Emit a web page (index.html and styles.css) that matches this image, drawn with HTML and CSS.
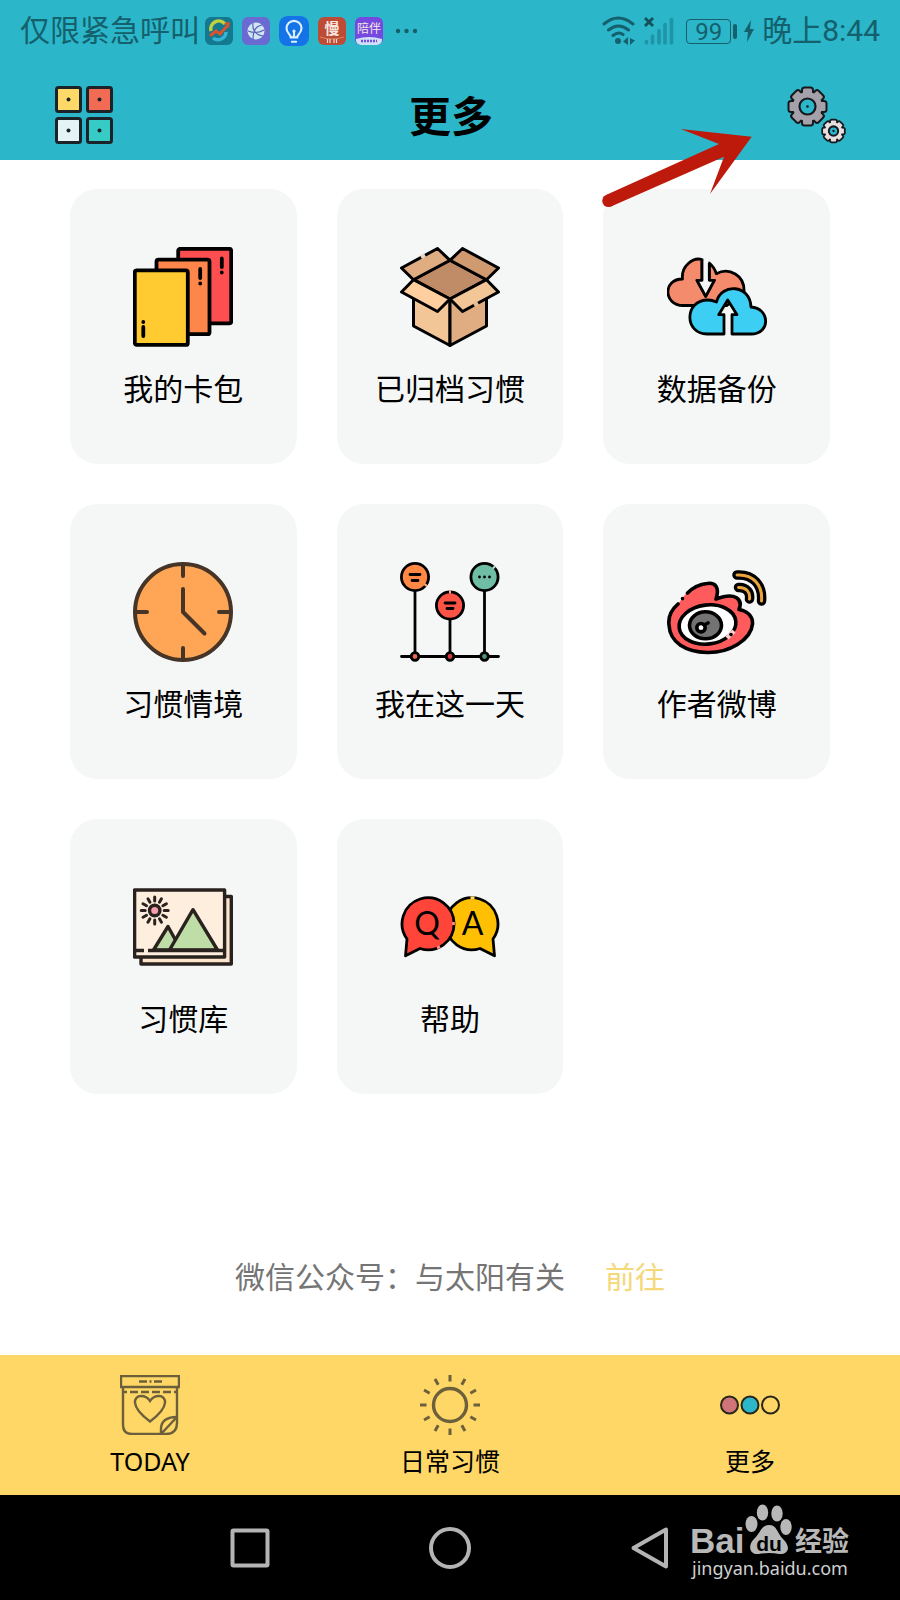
FILE: index.html
```html
<!DOCTYPE html>
<html lang="zh-CN">
  <head>
    <meta charset="UTF-8" />
    <meta name="viewport" content="width=device-width, initial-scale=1" />
    <title>更多</title>
    <link rel="stylesheet" href="styles.css">
  </head>
  <body>
    <header class="top">
      <div class="status-bar">
        <span class="carrier">仅限紧急呼叫</span>
        <div class="app-icons">
          <svg width="28" height="28" viewBox="0 0 28 28">
            <rect width="28" height="28" rx="6" fill="#14788f" />
            <path d="M20 7A8 8 0 0 0 6 14" fill="none" stroke="#c3d23c" stroke-width="3.5" />
            <path d="M8 21A8 8 0 0 0 21 15" fill="none" stroke="#35b5d6" stroke-width="3.5" />
            <path d="M5 19l6-5 4 3 8-9" fill="none" stroke="#d9532f" stroke-width="3" />
            <path d="M19 6l6-1-1 6z" fill="#d9532f" />
          </svg>
          <svg width="28" height="28" viewBox="0 0 28 28">
            <rect width="28" height="28" rx="6" fill="#6a6ad2" />
            <circle cx="14" cy="14" r="8.5" fill="#cfe6f5" />
            <path d="M11 6c-1 6 2 12 10 13M20 8c-7 1-9 6-9 14M6 14c5 2 11 2 16-1" fill="none" stroke="#5b62b4" stroke-width="1.2" />
          </svg>
          <svg width="30" height="30" viewBox="0 0 28 28">
            <rect width="28" height="28" rx="8" fill="#1473e6" />
            <path d="M11 20c0-3-4-4-4-8.500a7 7 0 0 1 14 0c0 4.500-4 5.500-4 8.500zM12 24h4M14 20v-6" fill="none" stroke="#d9f0ff" stroke-width="2" stroke-linecap="round" />
            <circle cx="14" cy="14" r="1.500" fill="#d9f0ff" />
          </svg>
          <svg width="28" height="28" viewBox="0 0 28 28">
            <rect width="28" height="28" rx="6" fill="#bd4b36" />
            <text x="14" y="17" class="glyph-man">慢</text>
            <path d="M2 20q12 4 24 0" fill="none" stroke="#d68a5c" />
            <path d="M9.500 22v4M12 22v4M16 22v4M18.500 22v4" stroke="#f3d9cf" stroke-width="1.2" />
          </svg>
          <svg width="28" height="28" viewBox="0 0 28 28">
            <rect width="28" height="28" rx="6" fill="#7549e0" />
            <text x="14" y="16" class="glyph-pei">陪伴</text>
            <path d="M1 22q13-4 26 0v1a5 5 0 0 1-5 5H6a5 5 0 0 1-5-5z" fill="#cfe0f7" />
            <path d="M6 24h16" stroke="#7549e0" stroke-width="2.500" stroke-dasharray="2 1" />
          </svg>
        </div>
        <svg class="dots" width="24" height="28" viewBox="0 0 24 28" fill="#14606c">
          <circle cx="3" cy="14" r="2.200" /><circle cx="11.500" cy="14" r="2.200" /><circle cx="20" cy="14" r="2.200" />
        </svg>
        <svg width="34" height="30" viewBox="0 0 34 30">
          <g fill="none" stroke="#14606c" stroke-width="3" stroke-linecap="round">
            <path d="M2 8q14-12 29 0M6.500 14q10-8 20 0M11 19.500q5.500-4.500 10-1" />
          </g>
          <circle cx="16" cy="25" r="3" fill="#14606c" />
          <path d="M26 21v8l-5-3.500zM28 22v7l5-4.500z" fill="#14606c" />
        </svg>
        <svg class="signal" width="30" height="30" viewBox="0 0 30 30">
          <path d="M1 2l8 8M9 2l-8 8" stroke="#14505a" stroke-width="2.800" />
          <path d="M2.500 25.500v1.500M8.500 20v7M15 14.500v12.500M21 8.500v18.500M27.500 3.500v23.500" stroke="#1e95a7" stroke-width="3.600" stroke-linecap="round" />
        </svg>
        <span class="battery">99</span>
        <svg class="bolt" width="10" height="22" viewBox="0 0 10 22">
          <path d="M7 0L0 12h4L3 22 10 9H6z" fill="#14606c" />
        </svg>
        <span class="clock">晚上8:44</span>
      </div>

      <div class="title-bar">
        <button class="icon-btn" aria-label="菜单">
          <svg width="60" height="60" viewBox="0 0 60 60" stroke="#1c2328" stroke-width="3">
            <rect x="1.500" y="1.500" width="24" height="24" rx="2" fill="#ffd968" />
            <rect x="32.500" y="1.500" width="24" height="24" rx="2" fill="#f26b55" />
            <rect x="1.500" y="32.500" width="24" height="24" rx="2" fill="#e3f3f6" />
            <rect x="32.500" y="32.500" width="24" height="24" rx="2" fill="#37cbc5" />
            <g fill="#1c2328" stroke="none">
              <circle cx="13.500" cy="13.500" r="2" /><circle cx="44.500" cy="13.500" r="2" />
              <circle cx="13.500" cy="44.500" r="2" /><circle cx="44.500" cy="44.500" r="2" />
            </g>
          </svg>
        </button>
        <h1>更多</h1>
        <button class="icon-btn" aria-label="设置">
          <svg width="60" height="60" viewBox="0 0 60 60">
            <defs>
              <g id="gear">
                <circle r="14.500" />
                <rect x="-4.500" y="-18" width="9" height="36" rx="1.500" />
                <rect x="-4.500" y="-18" width="9" height="36" rx="1.500" transform="rotate(45)" />
                <rect x="-4.500" y="-18" width="9" height="36" rx="1.500" transform="rotate(90)" />
                <rect x="-4.500" y="-18" width="9" height="36" rx="1.500" transform="rotate(135)" />
              </g>
            </defs>
            <g transform="translate(20.500 20.500)">
              <use href="#gear" fill="#17181c" stroke="#17181c" stroke-width="4" />
              <use href="#gear" fill="#a5a1aa" />
              <circle r="8" fill="#2bb6ca" stroke="#17181c" stroke-width="2.200" />
              <circle r="1.300" fill="#17181c" />
            </g>
            <g transform="translate(46.500 45) scale(.58)">
              <use href="#gear" fill="#17181c" stroke="#17181c" stroke-width="6" />
              <use href="#gear" fill="#e6dedf" />
              <circle r="8" fill="#2bb6ca" stroke="#17181c" stroke-width="3.500" />
              <circle r="2" fill="#17181c" />
            </g>
          </svg>
        </button>
      </div>

      <svg class="pointer-arrow" width="155" height="85" viewBox="0 0 155 85" fill="#bd1a0c">
        <circle cx="8.500" cy="75.700" r="6.300" />
        <path d="M6 70L119 19 80.700 4l71 7.700L110 69l14-37.300L11 81.500z" />
      </svg>
    </header>

    <main>
      <div class="cards">
        <button class="card">
          <svg viewBox="0 0 100 100" stroke="#000" stroke-width="3.800">
            <rect x="45.200" y="1.800" width="53" height="74.500" rx="2" fill="#ff4e50" />
            <rect x="23.500" y="12.700" width="53" height="74.500" rx="2" fill="#ff864a" />
            <rect x="1.800" y="23.400" width="53" height="74.500" rx="2" fill="#ffcb30" />
            <g fill="none" stroke-linecap="round">
              <path d="M88.800 11.500v8.500M88.800 25.500v.1M67.200 22v9M67.200 36.500v.1M10.300 80v9M10.300 75v.1" />
            </g>
          </svg>
          <span>我的卡包</span>
        </button>

        <button class="card">
          <svg viewBox="0 0 100 100" stroke="#000" stroke-width="3" stroke-linejoin="round">
            <path d="M13.500 45v34l36.500 19.500V52z" fill="#f3c697" />
            <path d="M86.500 45v34L50 98.500V52z" fill="#e0ad82" />
            <path d="M50 13.300L13.500 32.700 50 52l36.500-19.300z" fill="#c08c68" />
            <path d="M50 13.300L37.500 1.500 1.500 21l12 11.700z" fill="#e0ad82" />
            <path d="M50 13.300L62.500 1.500 98.500 21l-12 11.700z" fill="#cf9a70" />
            <path d="M13.500 32.700L1.500 45l36 19.500L50 52z" fill="#ffcf9f" />
            <path d="M86.500 32.700L98.500 45l-36 19.500L50 52z" fill="#f3c697" />
            <path d="M21 10.300l4-2.200" stroke="#e9d6c4" stroke-width="4" />
            <path d="M74 58.200l4-2.200" stroke="#eabb8f" stroke-width="4" />
          </svg>
          <span>已归档习惯</span>
        </button>

        <button class="card">
          <svg viewBox="0 0 100 100" stroke="#000" stroke-width="2.800" stroke-linejoin="round">
            <path d="M26 58.500H16C-4 58-4 32 15.500 32 14 19 26 10 35 12.500v20.800h-5l8.700 16 8.600-16h-5V16q5 4 7 10.700C62 20 78 28 77 45L60 58.500z" fill="#f48b6c" />
            <path d="M35 12.500V33.300h-5l8.700 16 8.600-16h-5V16z" fill="#f5f7f7" stroke="none" />
            <path d="M35 12.500V33.300h-5l8.700 16 8.600-16h-5V16" fill="none" />
            <path d="M57 87H40C17 87 17 53 41 53q4 0 8.500 2C54 36 83 37 84 60c19 1 20 27 0 27H65V67.700h5L60.700 53l-9 14.700H57z" fill="#3dcef3" />
          </svg>
          <span>数据备份</span>
        </button>

        <button class="card">
          <svg viewBox="0 0 100 100" fill="none" stroke="#463426" stroke-width="4" stroke-linecap="round" stroke-linejoin="round">
            <circle cx="50" cy="50" r="48" fill="#ffa656" />
            <path d="M50 3v11M50 86v11M3 50h11M86 50h11M50 27v23l21.500 21.500" />
          </svg>
          <span>习惯情境</span>
        </button>

        <button class="card">
          <svg viewBox="0 0 100 100" fill="none" stroke="#000" stroke-width="2.800" stroke-linecap="round">
            <path d="M1.500 94.500h97M15 28v63M50 58v33M84.500 28v63" />
            <circle cx="15" cy="15" r="13.600" fill="#ff8844" />
            <circle cx="50" cy="43.500" r="13.600" fill="#fb5346" />
            <circle cx="84.500" cy="15" r="13.600" fill="#70bda5" />
            <path d="M10 12.500h10M12 18.500h6M45 41h10M47 46.500h6" />
            <path d="M79.500 15v.1M84.500 15v.1M89.500 15v.1" />
            <circle cx="15" cy="94.500" r="3.800" fill="#e76a55" />
            <circle cx="50" cy="94.500" r="3.800" fill="#d8393f" />
            <circle cx="84.500" cy="94.500" r="3.800" fill="#4f9584" />
            <g stroke-width="3.400" stroke-linecap="butt">
              <path d="M25.200 24l1.300-1.800" stroke="#f8b38d" />
              <path d="M49 29.900h2" stroke="#f9a59f" />
              <path d="M93.300 4.600l1.500 1.400" stroke="#b6d9ce" />
            </g>
          </svg>
          <span>我在这一天</span>
        </button>

        <button class="card">
          <svg viewBox="0 0 100 100" fill="none" stroke="#000" stroke-width="3.600" stroke-linecap="round" stroke-linejoin="round">
            <path d="M12 41C4 48 1 55 2 63c1 18 17 27 38 27.500C62 91 84 78 85.500 62 86 54 80 49 72 47.500c4-10-3-18-23-10.500 4-12-1-17-9-15.500Q23 23 12 41z" fill="#ff5a5c" stroke="none" />
            <path d="M11 42C4 48 1 55 2 63c1 18 17 27 38 27.500C62 91 84 78 85.500 62 86 54 80 49 72 47.500c4-10-3-18-23-10.500 4-12-1-17-9-15.500q-11 1-19.500 9.500M15.500 36.500v.1" />
            <ellipse cx="40.500" cy="62.500" rx="28.500" ry="19.500" fill="#fff" transform="rotate(-7 40.500 62.500)" />
            <path d="M60 76l7-7" stroke="#ffd0d0" stroke-width="4.500" stroke-linecap="butt" />
            <path d="M64 72.500v.1" />
            <ellipse cx="38.500" cy="63.300" rx="16" ry="13.500" fill="#737373" />
            <circle cx="34" cy="65.700" r="4.200" fill="#fff" />
            <path d="M37 63l4-2" />
            <path d="M70 13Q97 11 94.500 40M71.500 25.500Q84 25 82.500 37" transform="translate(0 -7)" stroke="none" />
            <path d="M70 13c16-1 26 10 24.500 26M71.500 25.500c8-.5 12 5 11 11.500" stroke-width="9.500" />
            <path d="M70 13c16-1 26 10 24.500 26M71.500 25.500c8-.5 12 5 11 11.500" stroke="#eba53d" stroke-width="3" />
          </svg>
          <span>作者微博</span>
        </button>

        <button class="card">
          <svg viewBox="0 0 100 100" fill="none" stroke="#29221f" stroke-width="3.400" stroke-linejoin="round">
            <rect x="8" y="19.500" width="90.300" height="67.500" fill="#fce4cd" />
            <rect x="1.600" y="13" width="90" height="67" fill="#feeedd" />
            <path d="M20.500 73L35 49.500 48 73z" fill="#bfdda7" />
            <path d="M36.500 73L60 32.700 84.500 73z" fill="#bfdda7" />
            <path d="M2 73.500h9M15 73.500h76" />
            <circle cx="21.700" cy="33.500" r="5.200" fill="#f79bab" />
            <g stroke-linecap="round">
              <path d="M21.700 24v-4M21.700 43v4M12.200 33.500h-4M31.200 33.500h4M16.950 25.300l-2-3.500M26.450 25.300l2-3.500M16.950 41.700l-2 3.500M26.450 41.700l2 3.500M13.500 28.750l-3.500-2M29.900 28.750l3.500-2M13.500 38.250l-3.500 2M29.900 38.250l3.500 2" stroke-width="3" />
            </g>
          </svg>
          <span>习惯库</span>
        </button>

        <button class="card">
          <svg viewBox="0 0 100 100" fill="none" stroke="#000" stroke-width="2.800" stroke-linejoin="round">
            <path d="M93 62a26 26 0 1 0-13 9.500l14.500 7.300z" fill="#ffc003" />
            <path d="M7 62a26 26 0 1 1 13 9.500L5.500 78.800z" fill="#ff453a" />
            <path d="M70.500 20.800h4" stroke="#ffd964" />
            <path d="M37 71l3-1.500M53.500 45v3" stroke="#ff8a82" />
            <text x="27" y="58" class="qa">Q</text>
            <text x="72.500" y="58" class="qa">A</text>
          </svg>
          <span>帮助</span>
        </button>
      </div>

      <p class="note">
        <span>微信公众号：与太阳有关</span>
        <a href="#">前往</a>
      </p>
    </main>

    <nav class="tabs">
      <a href="#">
        <svg width="60" height="60" viewBox="0 0 60 60" fill="none" stroke="#6c5f3b" stroke-width="2.400">
          <path d="M1 1h58v11H1zM3 12v38q0 9 9 9h34q11 0 11-11V12" />
          <path d="M19 6.500h8M29.500 6.500h2M34 6.500h8M3 17h4M10 17h8M21 17h8M32 17h8M43 17h8M54 17h3" />
          <path d="M30 46.500C9 31 14 21 21 21q6 0 9 5 3-5 9-5c7 0 12 10-9 25.500z" />
          <path d="M41 59V53q1-11 16-11M41 59L56 43" />
        </svg>
        <span>TODAY</span>
      </a>
      <a href="#">
        <svg width="60" height="60" viewBox="0 0 60 60" fill="none" stroke="#6c5f3b">
          <circle cx="30" cy="30" r="16.500" stroke-width="3.400" />
          <g stroke-width="3">
            <path id="rays" d="M30 0v6.500M30 53.500v6.500M0 30h6.500M53.500 30h6.500" />
            <use href="#rays" transform="rotate(30 30 30)" />
            <use href="#rays" transform="rotate(60 30 30)" />
          </g>
        </svg>
        <span>日常习惯</span>
      </a>
      <a href="#">
        <svg width="60" height="60" viewBox="0 0 60 60" stroke="#282519" stroke-width="2">
          <circle cx="9.500" cy="30" r="8.500" fill="#d0747a" />
          <circle cx="30" cy="30" r="8.500" fill="#2bb6ca" />
          <circle cx="50.500" cy="30" r="8.500" fill="none" />
        </svg>
        <span>更多</span>
      </a>
    </nav>

    <div class="system-nav">
      <button aria-label="最近任务">
        <svg width="44" height="44" viewBox="0 0 44 44"><rect x="4.500" y="4.500" width="35" height="35" rx="1" /></svg>
      </button>
      <button aria-label="主页">
        <svg width="44" height="44" viewBox="0 0 44 44"><circle cx="22" cy="22" r="19" /></svg>
      </button>
      <button aria-label="返回">
        <svg width="44" height="44" viewBox="0 0 44 44"><path d="M38 3.500v37L5.500 22z" /></svg>
      </button>

      <svg class="watermark" width="162" height="80" viewBox="0 0 162 80" fill="#b8b8b8">
        <text x="0" y="49" class="wm-logo">Bai</text>
        <ellipse cx="61.500" cy="20" rx="6" ry="8" />
        <ellipse cx="72.500" cy="8.500" rx="5.700" ry="8" />
        <ellipse cx="87" cy="9.500" rx="5.700" ry="8" />
        <ellipse cx="96" cy="23" rx="5.700" ry="8" />
        <path d="M79 21c8 0 8 8 14 14 10 10 3 16-4 15q-10-2-20 0c-9 1-12-8-5-15 6-5 7-14 15-14z" />
        <text x="79" y="47" class="wm-du">du</text>
        <text x="105" y="47" class="wm-cn">经验</text>
        <text x="2" y="71" class="wm-url">jingyan.baidu.com</text>
      </svg>
    </div>
  </body>
</html>
```

FILE: styles.css
```css
* {
  margin: 0;
  padding: 0;
  box-sizing: border-box;
}

body {
  min-height: 100vh;
  display: flex;
  flex-direction: column;
  font-family: "Noto Sans", "Noto Sans CJK SC", sans-serif;
  background: #fff;
  color: #000;
}

button {
  background: none;
  border: none;
  font: inherit;
  color: inherit;
  cursor: pointer;
}

a {
  color: inherit;
  text-decoration: none;
}

svg {
  display: block;
  flex-shrink: 0;
}

/* status bar + title */
.top {
  position: relative;
  background: #2bb6ca;
}

.status-bar {
  display: flex;
  align-items: center;
  height: 62px;
  padding: 0 20px;
  font-family: Roboto, "Noto Sans CJK SC", sans-serif;
  font-size: 30px;
  line-height: 40px;
  color: #14606c;
  white-space: nowrap;
}

.carrier {
  margin-right: 5px;
}

.app-icons {
  display: flex;
  align-items: center;
  gap: 9px;
}

.glyph-man,
.glyph-pei {
  font-family: "Noto Sans CJK SC", sans-serif;
  font-weight: 700;
  font-size: 15px;
  text-anchor: middle;
  fill: #f6e6df;
}

.glyph-pei {
  font-size: 12px;
  font-weight: 400;
}

.dots {
  margin-left: 12px;
  margin-right: auto;
}

.signal {
  margin-left: 8px;
}

.battery {
  position: relative;
  width: 45px;
  height: 25px;
  margin-left: 12px;
  border: 1px solid #14606c;
  border-radius: 4px;
  font-size: 24px;
  line-height: 24px;
  text-align: center;
}

.battery::after {
  content: "";
  position: absolute;
  right: -7px;
  top: 4px;
  width: 4px;
  height: 15px;
  border-radius: 2px;
  background: #14606c;
}

.bolt {
  margin: 0 8px 0 13px;
}

.title-bar {
  display: flex;
  align-items: center;
  justify-content: space-between;
  height: 98px;
  padding: 10px 53px 0 55px;
}

.title-bar h1 {
  font-size: 42px;
  line-height: 48px;
  font-weight: 700;
}

.pointer-arrow {
  position: absolute;
  right: 145px;
  top: 125px;
  z-index: 1;
  pointer-events: none;
}

/* cards */
main {
  flex: 1;
  display: flex;
  flex-direction: column;
  justify-content: space-between;
  padding: 29px 70px 58px;
}

.cards {
  display: grid;
  grid-template-columns: repeat(3, 1fr);
  gap: 40px;
}

.card {
  display: flex;
  flex-direction: column;
  align-items: center;
  gap: 22px;
  padding: 58px 0 55px;
  border-radius: 27px;
  background: #f5f7f7;
  font-size: 30px;
  line-height: 40px;
}

.card svg {
  width: 100px;
  height: 100px;
}

.qa {
  font-family: Lato, sans-serif;
  font-size: 32px;
  font-weight: 400;
  text-anchor: middle;
  fill: #000;
  stroke: none;
}

.note {
  display: flex;
  justify-content: center;
  gap: 40px;
  font-size: 30px;
  line-height: 40px;
  color: #757575;
}

.note a {
  color: #f5d878;
}

/* bottom tabs */
.tabs {
  display: grid;
  grid-template-columns: repeat(3, 1fr);
  background: #fed766;
}

.tabs a {
  display: flex;
  flex-direction: column;
  align-items: center;
  gap: 10px;
  padding: 20px 0 18px;
  font-size: 25px;
  line-height: 32px;
}

.system-nav {
  position: relative;
  display: grid;
  grid-template-columns: repeat(3, 1fr);
  place-items: center;
  height: 105px;
  padding: 0 150px;
  background: #000;
}

.system-nav button svg {
  fill: none;
  stroke: #b4b4b4;
  stroke-width: 4;
  stroke-linejoin: round;
}

.watermark {
  position: absolute;
  right: 48px;
  bottom: 16px;
}

.wm-logo {
  font: 700 35px "Liberation Sans", sans-serif;
}

.wm-du {
  font: 700 21px "Liberation Sans", sans-serif;
  text-anchor: middle;
  fill: #000;
}

.wm-cn {
  font: 700 27px "Noto Sans CJK SC", sans-serif;
}

.wm-url {
  font: 400 18px "Noto Sans", sans-serif;
  fill: #d0d0d0;
}
```
